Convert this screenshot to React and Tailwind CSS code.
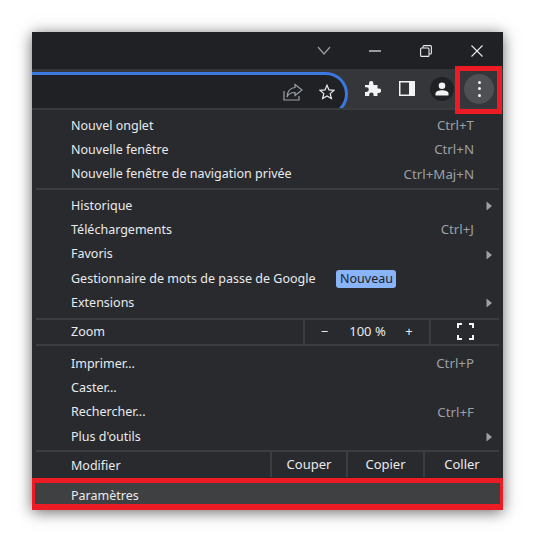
const Arrow = () => (
  <svg width="6" height="9" viewBox="0 0 6 9" className="absolute right-[11px] top-1/2 -translate-y-1/2"><path d="M0.5 0 L6 4.5 L0.5 9 Z" fill="#9aa0a6" /></svg>
);

function Row({ label, shortcut, arrow, badge }) {
  return (
    <div className="relative flex h-[24.3px] shrink-0 items-center pl-[39px] pr-[29px] text-[#e8eaed]">
      <span>{label}</span>
      {badge && <span className="ml-[21px] flex h-[18px] w-[60px] items-center justify-center rounded-[3px] bg-[#8ab4f8] text-[12.5px] text-[#202124]">{badge}</span>}
      {shortcut && <span className="ml-auto text-[13.3px] text-[#9aa0a6]">{shortcut}</span>}
      {arrow && <Arrow />}
    </div>
  );
}

const Sep = ({ className = "" }) => <div className={`mx-[4px] h-[2px] shrink-0 bg-[#3c3d41] ${className}`} />;

export default function App() {
  return (
    <div className="h-[542px] w-[535px] bg-white pl-[32px] pt-[32px]" style={{ fontFamily: '"Noto Sans", "Open Sans", sans-serif' }}>
      <div className="relative flex h-[478px] w-[471px] flex-col bg-[#292a2d] text-[12.5px] shadow-[0_2px_14px_rgba(0,0,0,0.6)]">
        <div className="flex h-[37px] shrink-0 items-center bg-[#202124] text-[#e8eaed]">
          <div className="ml-auto flex items-center">
            <div className="flex w-[51px] justify-center">
              <svg width="14" height="9" viewBox="0 0 14 9" fill="none" stroke="#9aa0a6" strokeWidth="1.2"><path d="M1 1 L7 8 L13 1" /></svg>
            </div>
            <div className="flex w-[51px] justify-center">
              <svg width="12" height="2" viewBox="0 0 12 2"><rect width="12" height="1.2" y="0.4" fill="#e8eaed" /></svg>
            </div>
            <div className="flex w-[51px] justify-center">
              <svg width="12" height="12" viewBox="0 0 12 12" fill="none" stroke="#e8eaed" strokeWidth="1.1"><rect x="0.6" y="3" width="8.4" height="8.4" rx="1" /><path d="M3 3 V1.6 Q3 0.6 4 0.6 H10.4 Q11.4 0.6 11.4 1.6 V8 Q11.4 9 10.4 9 H9" /></svg>
            </div>
            <div className="flex w-[52px] justify-center pr-[1px]">
              <svg width="12" height="12" viewBox="0 0 12 12" stroke="#e8eaed" strokeWidth="1.1"><path d="M0.5 0.5 L11.5 11.5 M11.5 0.5 L0.5 11.5" /></svg>
            </div>
          </div>
        </div>
        <div className="flex h-[39px] shrink-0 overflow-hidden bg-[#35363a]">
          <div className="mt-[3px] flex h-[44px] w-[316px] shrink-0 items-start justify-end rounded-r-[22px] border-y-[3px] border-r-[3px] border-[#3b78e0] bg-[#202124] pt-[8px]">
            <svg width="20" height="18" viewBox="0 0 20 18" fill="none" stroke="#9aa0a6" strokeWidth="1.2" className="mr-[16px]"><path d="M1 8 V17 H16 V13" /><path d="M12 1.5 L19 7 L12 12.5 V9.5 C8 9.5 5.5 10.5 4 14 C4.3 9 7 5 12 4.5 Z" /></svg>
            <svg width="16" height="16" viewBox="0 0 16 16" fill="none" stroke="#e8eaed" strokeWidth="1.2" className="mr-[10px] mt-[1px]"><path d="M8 1.2 L10 5.9 L15 6.3 L11.2 9.6 L12.4 14.6 L8 12 L3.6 14.6 L4.8 9.6 L1 6.3 L6 5.9 Z" /></svg>
          </div>
          <div className="ml-[6.5px] flex w-[35px] items-center justify-center">
            <svg width="17" height="17" viewBox="0 0 17 17" fill="#f1f3f4"><path d="M1 5 H5 V3.2 a2.2 2.2 0 0 1 4.4 0 V5 H13.5 V8.5 H15 a2.2 2.2 0 0 1 0 4.4 H13.5 V16 H9.6 V14.6 a2.2 2.2 0 0 0 -4.4 0 V16 H1 V12 H2.4 a2.4 2.4 0 0 0 0 -4.8 H1 Z" /></svg>
          </div>
          <div className="flex w-[35px] items-center justify-center">
            <svg width="16" height="15" viewBox="0 0 16 15"><rect x="0.75" y="0.75" width="14.5" height="13.5" fill="none" stroke="#f1f3f4" strokeWidth="1.5" /><rect x="10" y="1" width="5" height="13" fill="#f1f3f4" /></svg>
          </div>
          <div className="flex w-[35px] items-center justify-center">
            <div className="flex h-[24px] w-[24px] items-center justify-center rounded-full bg-[#202124]">
              <svg width="14" height="14" viewBox="0 0 14 14" fill="#f1f3f4"><circle cx="7" cy="3.7" r="3.3" /><path d="M0.5 13.5 V11.5 C0.5 9.2 4 8.2 7 8.2 C10 8.2 13.5 9.2 13.5 11.5 V13.5 Z" /></svg>
            </div>
          </div>
          <div className="ml-[4.5px] flex w-[30px] items-center justify-center">
            <div className="flex h-[30px] w-[30px] flex-col items-center justify-center gap-[3.5px] rounded-full bg-[#4f5053]">
              <span className="h-[3px] w-[3px] rounded-full bg-[#f1f3f4]" />
              <span className="h-[3px] w-[3px] rounded-full bg-[#f1f3f4]" />
              <span className="h-[3px] w-[3px] rounded-full bg-[#f1f3f4]" />
            </div>
          </div>
        </div>
        <div className="h-[2px] shrink-0 bg-[#3a3b3f]" />
        <div className="flex min-h-0 flex-1 flex-col pt-[4px]">
          <Row label="Nouvel onglet" shortcut="Ctrl+T" />
          <Row label="Nouvelle fenêtre" shortcut="Ctrl+N" />
          <Row label="Nouvelle fenêtre de navigation privée" shortcut="Ctrl+Maj+N" />
          <Sep className="mb-[4px] mt-[1px]" />
          <Row label="Historique" arrow />
          <Row label="Téléchargements" shortcut="Ctrl+J" />
          <Row label="Favoris" arrow />
          <Row label="Gestionnaire de mots de passe de Google" badge="Nouveau" />
          <Row label="Extensions" arrow />
          <Sep className="mt-[2.5px]" />
          <div className="flex h-[24px] shrink-0 items-center pl-[39px] text-[#e8eaed]">
            <span className="w-[232px] pt-[1px]">Zoom</span>
            <div className="flex h-full w-[128px] items-center border-x-2 border-[#3c3d41] text-[13px]">
              <span className="w-[39px] text-center">−</span>
              <span className="w-[47px] text-center">100 %</span>
              <span className="w-[36px] text-center">+</span>
            </div>
            <div className="flex w-[68px] justify-center">
              <svg width="17" height="17" viewBox="0 0 17 17" fill="none" stroke="#f1f3f4" strokeWidth="2"><path d="M1 5 V1 H5 M12 1 H16 V5 M16 12 V16 H12 M5 16 H1 V12" /></svg>
            </div>
          </div>
          <Sep className="mb-[6px]" />
          <Row label="Imprimer..." shortcut="Ctrl+P" />
          <Row label="Caster..." />
          <Row label="Rechercher..." shortcut="Ctrl+F" />
          <Row label="Plus d'outils" arrow />
          <Sep className="mt-[1px]" />
          <div className="flex h-[25px] shrink-0 items-center pl-[39px] text-[#e8eaed]">
            <span className="w-[199px] pt-[3px]">Modifier</span>
            <div className="flex h-full w-[229px] border-l-2 border-[#3c3d41] pb-0 text-[13px]">
              <span className="flex w-[76px] items-center justify-center border-r-2 border-[#3c3d41] pt-[1px]">Couper</span>
              <span className="flex w-[77px] items-center justify-center border-r-2 border-[#3c3d41] pt-[1px]">Copier</span>
              <span className="flex flex-1 items-center justify-center pt-[1px]">Coller</span>
            </div>
          </div>
          <div className="mt-auto flex h-[32px] shrink-0 items-center bg-[#3f4042] pl-[39px] pt-[4px] text-[#e8eaed]">Paramètres</div>
        </div>
        <div className="absolute left-[423px] top-[34px] h-[48px] w-[47px] border-[5px] border-[#ed1c24]" />
        <div className="absolute inset-x-0 bottom-0 h-[32px] border-x-[3px] border-b-[6px] border-t-[5px] border-[#ed1c24]" />
      </div>
    </div>
  );
}
